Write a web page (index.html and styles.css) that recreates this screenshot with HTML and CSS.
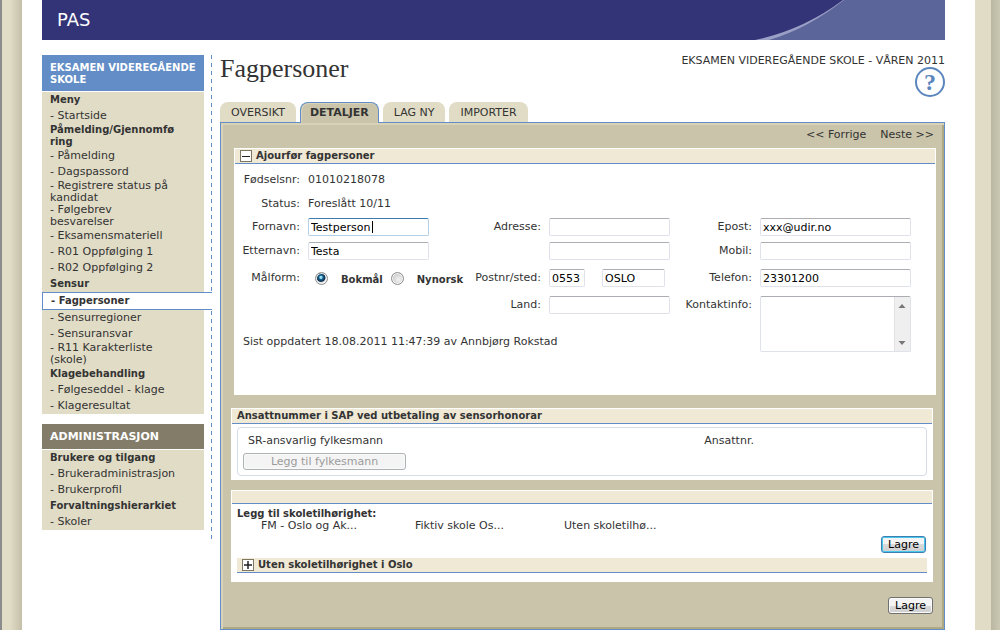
FILE: index.html
```html
<!DOCTYPE html>
<html lang="no">
<head>
<meta charset="utf-8">
<title>PAS - Fagpersoner</title>
<link rel="stylesheet" href="styles.css">
</head>
<body>
<div class="frame">
  <div class="edge-left"></div>
  <div class="page">
    <header class="banner">
      <span>PAS</span>
      <svg class="swoosh" width="190" height="40" viewBox="0 0 190 40" aria-hidden="true">
        <path d="M0 40Q48 30 88 0H190V40Z" fill="#9a9fc5"/>
        <path d="M14 40Q52 29 89 0H190V40Z" fill="#5c6599"/>
      </svg>
    </header>
    <div class="columns">
      <nav class="sidebar">
        <h2 class="menu-head">EKSAMEN VIDEREGÅENDE SKOLE</h2>
        <ul class="menu">
          <li class="group">Meny</li>
          <li><a href="#">- Startside</a></li>
          <li class="group"><span>Påmelding/Gjennomfø<br>ring</span></li>
          <li><a href="#">- Påmelding</a></li>
          <li><a href="#">- Dagspassord</a></li>
          <li><a href="#">- Registrere status på<br>kandidat</a></li>
          <li><a href="#">- Følgebrev<br>besvarelser</a></li>
          <li><a href="#">- Eksamensmateriell</a></li>
          <li><a href="#">- R01 Oppfølging 1</a></li>
          <li><a href="#">- R02 Oppfølging 2</a></li>
          <li class="group">Sensur</li>
          <li class="current"><a href="#">- Fagpersoner</a></li>
          <li><a href="#">- Sensurregioner</a></li>
          <li><a href="#">- Sensuransvar</a></li>
          <li><a href="#">- R11 Karakterliste<br>(skole)</a></li>
          <li class="group">Klagebehandling</li>
          <li><a href="#">- Følgeseddel - klage</a></li>
          <li><a href="#">- Klageresultat</a></li>
        </ul>
        <h2 class="menu-head admin">ADMINISTRASJON</h2>
        <ul class="menu">
          <li class="group">Brukere og tilgang</li>
          <li><a href="#">- Brukeradministrasjon</a></li>
          <li><a href="#">- Brukerprofil</a></li>
          <li class="group">Forvaltningshierarkiet</li>
          <li><a href="#">- Skoler</a></li>
        </ul>
      </nav>
      <main class="main">
        <div class="heading">
          <h1>Fagpersoner</h1>
          <div class="context">
            <span>EKSAMEN VIDEREGÅENDE SKOLE - VÅREN 2011</span>
            <a href="#" class="help" aria-label="Hjelp">?</a>
          </div>
        </div>
        <nav class="tabs">
          <a href="#">OVERSIKT</a>
          <a href="#" class="selected">DETALJER</a>
          <a href="#">LAG NY</a>
          <a href="#">IMPORTER</a>
        </nav>
        <div class="panel">
          <div class="pager"><a href="#">&lt;&lt; Forrige</a><a href="#">Neste &gt;&gt;</a></div>

          <section class="card person">
            <h3 class="bar">
              <button class="toggle" aria-label="Skjul"><svg width="12" height="12" viewBox="0 0 12 12"><rect x=".5" y=".5" width="11" height="11" fill="#fff" stroke="#7d7761"/><path d="M2 6.5H10" stroke="#222"/></svg></button>
              Ajourfør fagpersoner
            </h3>
            <form class="fields">
              <span class="label">Fødselsnr:</span><span class="wide">01010218078</span>
              <span class="label">Status:</span><span class="wide">Foreslått 10/11</span>

              <label class="label" for="fornavn">Fornavn:</label>
              <div class="focused"><input class="text" id="fornavn" value="Testperson"></div>
              <label class="label" for="adresse">Adresse:</label>
              <input class="text full" id="adresse">
              <label class="label" for="epost">Epost:</label>
              <input class="text full" id="epost" value="xxx@udir.no">

              <label class="label" for="etternavn">Etternavn:</label>
              <div><input class="text" id="etternavn" value="Testa"></div>
              <span></span>
              <input class="text full" id="adresse2" aria-label="Adresse linje 2">
              <label class="label" for="mobil">Mobil:</label>
              <input class="text full" id="mobil">

              <span class="label">Målform:</span>
              <div class="choices">
                <input type="radio" name="malform" id="bokmal" checked><label for="bokmal">Bokmål</label>
                <input type="radio" name="malform" id="nynorsk"><label for="nynorsk">Nynorsk</label>
              </div>
              <label class="label" for="postnr">Postnr/sted:</label>
              <div class="post">
                <input class="text nr" id="postnr" value="0553">
                <input class="text sted" aria-label="Sted" value="OSLO">
              </div>
              <label class="label" for="telefon">Telefon:</label>
              <input class="text full" id="telefon" value="23301200">

              <label class="label land" for="land">Land:</label>
              <input class="text full" id="land">
              <label class="label" for="kontakt">Kontaktinfo:</label>
              <div class="area">
                <textarea id="kontakt"></textarea>
                <svg class="scroll" width="16" height="54" viewBox="0 0 16 54" aria-hidden="true"><path d="M0 0H16V54H0Z" fill="#efefef"/><path d="M.5 0V54" stroke="#e2e2e2"/><path d="M4.500 11L8 7L11.500 11Z" fill="#777"/><path d="M4.500 44L8 48L11.500 44Z" fill="#777"/></svg>
              </div>
              <p class="updated">Sist oppdatert 18.08.2011 11:47:39 av Annbjørg Rokstad</p>
            </form>
          </section>

          <section class="card">
            <h3 class="bar">Ansattnummer i SAP ved utbetaling av sensorhonorar</h3>
            <div class="employer">
              <div class="employer-head"><span>SR-ansvarlig fylkesmann</span><span>Ansattnr.</span></div>
              <button class="btn add" disabled>Legg til fylkesmann</button>
            </div>
          </section>

          <section class="card schools">
            <div class="bar short"></div>
            <div class="schools-body">
              <h4>Legg til skoletilhørighet:</h4>
              <div class="school-row"><span>FM - Oslo og Ak...</span><span>Fiktiv skole Os...</span><span>Uten skoletilhø...</span></div>
              <div class="actions"><button class="btn default">Lagre</button></div>
              <h3 class="bar nested">
                <button class="toggle" aria-label="Vis"><svg width="12" height="12" viewBox="0 0 12 12"><rect x=".5" y=".5" width="11" height="11" fill="#fff" stroke="#7d7761"/><path d="M2 6H10M6 2V10" stroke="#222" stroke-width="1.500"/></svg></button>
                Uten skoletilhørighet i Oslo
              </h3>
            </div>
          </section>

          <div class="save"><button class="btn">Lagre</button></div>
        </div>
      </main>
    </div>
  </div>
  <div class="edge-right"></div>
</div>
</body>
</html>
```

FILE: styles.css
```css
* { box-sizing: border-box; }
body { margin: 0; font: 11px/12px "DejaVu Sans", Verdana, sans-serif; color: #333; background: #e1dcc6; }
a { color: inherit; text-decoration: none; }
h1, h2, h3, h4, p, ul { margin: 0; padding: 0; }
input, button, textarea { font: inherit; margin: 0; }

.frame { display: flex; min-height: 100vh; }
.edge-left { flex: none; width: 22px; border-left: 2px solid #8b8b8b; background: linear-gradient(90deg, #e1dcc6 40%, #c4bfa8); }
.edge-right { flex: none; width: 25px; background: linear-gradient(90deg, #e1dcc6 16px, #b9b6a2 16px, #cac8b4 25px); }
.page { flex: 1; min-width: 0; padding: 0 30px 0 20px; background: #fff; }

.banner { position: relative; display: flex; align-items: center; height: 40px; padding-left: 15px; background: #333377; color: #fff; font-size: 18px; line-height: 20px; }
.swoosh { position: absolute; right: 0; top: 0; }
.columns { display: flex; align-items: flex-start; gap: 8px; padding-top: 15px; }

.sidebar { flex: none; width: 170px; height: 485px; padding-right: 8px; background: repeating-linear-gradient(#628dc6 0 4px, #fff 4px 8px) 100% 0 / 1px 100% no-repeat; }
.menu-head { display: flex; align-items: center; min-height: 36px; padding: 1px 0 0 8px; margin-bottom: 1px; background: #628dc6; color: #fff; font-size: 10px; line-height: 12px; }
.menu-head.admin { min-height: 25px; margin-top: 10px; background: #837c69; font-size: 11px; }
.menu { list-style: none; background: #e1dcc6; }
.menu li { display: flex; align-items: center; min-height: 16px; padding-left: 8px; white-space: nowrap; }
.menu .group { font-weight: bold; font-size: 10px; }
.menu .current { min-height: 18px; margin-right: -8px; border: 1px solid #628dc6; border-right: 0; background: #fff; font-weight: bold; font-size: 10px; }

.main { flex: 1; min-width: 0; }
.heading { display: flex; justify-content: space-between; height: 47px; }
h1 { font: 26px/28px "Liberation Serif", Georgia, serif; }
.context { display: flex; flex-direction: column; align-items: flex-end; }
.help { display: flex; align-items: center; justify-content: center; width: 30px; height: 30px; border: 2px solid #5a85bd; border-radius: 50%; color: #5a85bd; font: bold 24px/24px "Liberation Serif", serif; }

.tabs { display: flex; gap: 4px; }
.tabs a { height: 20px; padding: 0 11px; border-radius: 8px 8px 0 0; background: #e1dcc6; line-height: 21px; }
.tabs .selected { height: 21px; margin-bottom: -1px; padding: 0 9px; border: 1px solid #628dc6; border-bottom: 0; background: #c9c4aa; box-shadow: inset 1px 1px #d8d3b8; line-height: 20px; font-weight: bold; position: relative; }

.panel { padding: 6px 8px 15px; border: 1px solid #628dc6; background: #c9c4aa; box-shadow: inset 2px 2px #d8d3b8, inset -2px -2px #afa983; }
.pager { display: flex; justify-content: flex-end; gap: 14px; padding: 0 2px 7px; }

.card { margin: 0 3px 10px 2px; padding: 1px; background: #fff; }
.person { margin: 0 0 13px 5px; }
.bar { display: flex; align-items: center; gap: 4px; height: 15px; padding-left: 5px; border-bottom: 1px solid #628dc6; background: #efe9d6; font-size: 10px; line-height: 12px; }
.bar.short { height: 13px; }
.toggle { display: flex; padding: 0; border: 0; background: none; }

.fields { display: grid; grid-template-columns: 65px 156fr 69px 121fr 74px 151fr; grid-template-rows: 24px 24px 22px 26px 28px 26px 48px; column-gap: 8px; align-items: center; padding: 4px 24px 28px 0; }
.label { text-align: right; white-space: nowrap; }
.wide { grid-column: 2 / -1; }
.text { height: 18px; width: 121px; padding: 0 2px; border: 1px solid #dfe2ea; border-top-color: #abadb3; border-radius: 2px; background: #fff; color: #000; outline: 0; }
.full { width: 100%; }
.focused { position: relative; }
.focused .text { border-color: #b5cfe7; border-top-color: #3d7bad; }
.focused::after { content: ""; position: absolute; left: 64px; top: 3px; width: 1px; height: 12px; background: #000; }
.choices { display: flex; align-items: center; padding-left: 7px; font-size: 10px; font-weight: bold; }
.choices label { margin: 3px 8px 0 13px; }
.choices label:last-child { margin-right: 0; }
.choices input { appearance: none; flex: none; width: 13px; height: 13px; border: 1px solid #8e8f8f; border-radius: 50%; background: radial-gradient(circle at 60% 60%, #f4f4f4, #c8c8c8 75%); box-shadow: inset 0 0 0 1px #f4f4f4; }
.choices input:checked { background: radial-gradient(circle at 45% 40%, #9fe0f5 0 1px, #1a6a98 2px, #0b2b4a 4px, #e4e4e4 5px); }
.post { display: flex; gap: 17px; }
.nr { width: 36px; }
.sted { width: 63px; }
.land { grid-column: 3; }
.area { position: relative; grid-row: 6 / 8; grid-column: 6; align-self: start; display: flex; padding-top: 4px; }
.area textarea { width: 100%; height: 56px; resize: none; border: 1px solid #dfe2ea; border-top-color: #abadb3; border-radius: 2px; outline: 0; overflow: hidden; padding: 2px 18px 2px 2px; }
.scroll { position: absolute; right: 1px; bottom: 1px; }
.updated { grid-column: 1 / 5; grid-row: 7; padding-left: 8px; }

.employer { height: 49px; margin: 3px 5px 3px; padding: 7px 5px; border: 1px solid #d5dde8; border-radius: 4px; }
.employer-head { display: grid; grid-template-columns: 457fr 217fr; padding-left: 5px; }
.btn { height: 17px; padding: 0 6px; border: 1px solid #707070; border-radius: 3px; background: linear-gradient(#f4f4f4 50%, #dadada 50%, #cfcfcf); box-shadow: inset 0 0 0 1px #fafafa; color: #000; line-height: 15px; }
.btn.add { display: block; width: 163px; margin-top: 6px; border-color: #adb2b5; background: #f4f4f4; color: #9b9b9b; }
.btn.default { border-color: #3c7fb1; box-shadow: inset 0 0 0 1px #48c7ee; }

.schools { margin-bottom: 15px; }
.schools-body { padding: 4px 5px 8px; }
h4 { font-size: 10px; }
.school-row { display: grid; grid-template-columns: 154fr 149fr 363fr; padding-left: 24px; }
.actions { display: flex; justify-content: flex-end; padding: 4px 1px 5px; }
.save { display: flex; justify-content: flex-end; padding-right: 3px; }
```
